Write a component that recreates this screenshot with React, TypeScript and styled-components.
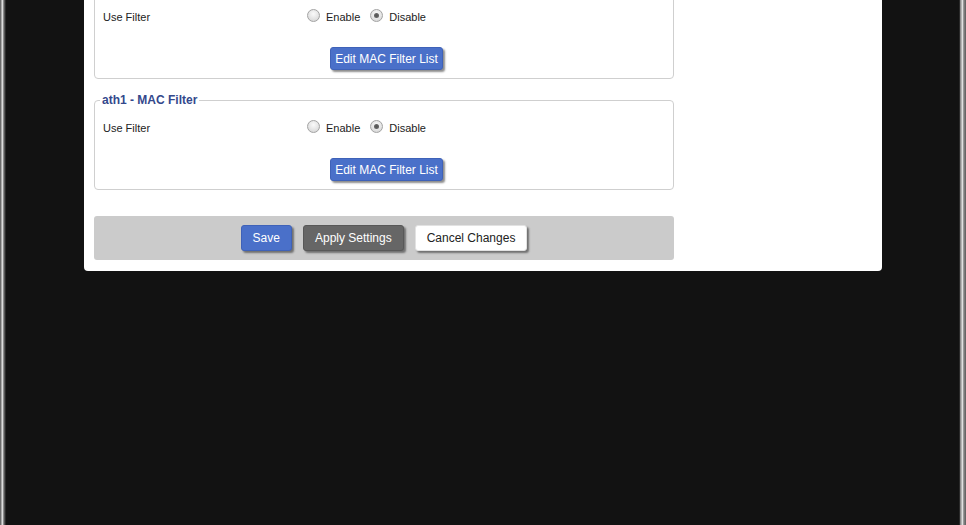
import React from 'react'
import styled, { createGlobalStyle } from 'styled-components'

const Global = createGlobalStyle`
  html, body {
    margin: 0;
    padding: 0;
    height: 100%;
    background: #121212;
    overflow: hidden;
  }
  body {
    font-family: "Liberation Sans", Arial, sans-serif;
  }
`

const Frame = styled.div`
  display: flex;
  height: 100vh;
`

const Edge = styled.div<{ $side: 'left' | 'right' }>`
  flex: none;
  width: ${p => (p.$side === 'left' ? '6px' : '7px')};
  background: ${p =>
    p.$side === 'left'
      ? 'linear-gradient(to right, #6a6a6a 0 1px, #a8a8a8 1px 2px, #dcdcdc 2px 3px, #8c8c8c 3px 4px, #555 4px 5px, #2a2a2a 5px 6px)'
      : 'linear-gradient(to right, #2a2a2a 0 1px, #8c8c8c 1px 2px, #b4b4b4 2px 3px, #e0e0e0 3px 4px, #9a9a9a 4px 5px, #7a7a7a 5px 6px, #666 6px 7px)'};
`

const Stage = styled.div`
  flex: 1;
  background: #121212;
  overflow: hidden;
`

const Panel = styled.div`
  margin: -28px 0 0 78px;
  width: 798px;
  box-sizing: border-box;
  padding: 10px 10px 11px;
  background: #fff;
  border-radius: 0 0 4px 4px;
`

const Section = styled.div`
  width: 580px;
`

const Fieldset = styled.fieldset`
  margin: 0 0 14px;
  padding: 0 0 8px 5px;
  border: 1px solid #cfcfcf;
  border-radius: 4px;
  min-width: 0;
`

const Legend = styled.legend`
  padding: 0 2px;
  font-size: 12px;
  line-height: 14px;
  font-weight: bold;
  color: #34488c;
`

const Row = styled.div`
  display: flex;
  align-items: center;
  height: 20px;
  margin-top: 11px;
  padding-left: 3px;
  font-size: 11px;
  color: #222;
`

const Label = styled.div`
  width: 204px;
  flex: none;
`

const Option = styled.label`
  display: flex;
  align-items: center;
  margin-right: 10px;
  font-size: 11px;
  color: #222;
`

const Radio = styled.span<{ $checked?: boolean }>`
  position: relative;
  box-sizing: border-box;
  width: 13px;
  height: 13px;
  margin: -3px 6px 0 0;
  border-radius: 50%;
  border: 1px solid #a3a3a3;
  background: radial-gradient(circle at 50% 35%, #fafafa 0%, #e4e4e4 55%, #cfcfcf 100%);

  &::after {
    content: '';
    display: ${p => (p.$checked ? 'block' : 'none')};
    position: absolute;
    left: 3px;
    top: 3px;
    width: 5px;
    height: 5px;
    border-radius: 50%;
    background: radial-gradient(circle, #555 0%, #6c6c6c 100%);
  }
`

const Centered = styled.div`
  display: flex;
  justify-content: center;
  margin-top: 20px;
`

const Button = styled.button<{ $variant: 'blue' | 'grey' | 'white'; $tall?: boolean }>`
  height: ${p => (p.$tall ? '26px' : '23px')};
  padding: ${p => (p.$tall ? '0 11px' : '0 4px')};
  font-family: "Liberation Sans", Arial, sans-serif;
  font-size: 12px;
  border-radius: 3px;
  cursor: pointer;
  box-shadow: 2px 2px 2px rgba(0, 0, 0, 0.45);
  border: 1px solid
    ${p => (p.$variant === 'blue' ? '#3f62b8' : p.$variant === 'grey' ? '#585858' : '#e2e2e2')};
  background: ${p => (p.$variant === 'blue' ? '#4a70c9' : p.$variant === 'grey' ? '#666' : '#fff')};
  color: ${p => (p.$variant === 'white' ? '#222' : '#fff')};
`

const Bar = styled.div`
  display: flex;
  justify-content: center;
  align-items: center;
  gap: 11px;
  height: 44px;
  margin-top: 26px;
  background: #cbcbcb;
  border-radius: 3px;
`

function FilterBlock({ name }: { name: string }) {
  return (
    <Fieldset>
      <Legend>{name} - MAC Filter</Legend>
      <Row>
        <Label>Use Filter</Label>
        <Option>
          <Radio />
          Enable
        </Option>
        <Option>
          <Radio $checked />
          Disable
        </Option>
      </Row>
      <Centered>
        <Button $variant="blue">Edit MAC Filter List</Button>
      </Centered>
    </Fieldset>
  )
}

export default function App() {
  return (
    <>
      <Global />
      <Frame>
        <Edge $side="left" />
        <Stage>
          <Panel>
            <Section>
              <FilterBlock name="ath0" />
              <FilterBlock name="ath1" />
              <Bar>
                <Button $variant="blue" $tall>Save</Button>
                <Button $variant="grey" $tall>Apply Settings</Button>
                <Button $variant="white" $tall>Cancel Changes</Button>
              </Bar>
            </Section>
          </Panel>
        </Stage>
        <Edge $side="right" />
      </Frame>
    </>
  )
}
